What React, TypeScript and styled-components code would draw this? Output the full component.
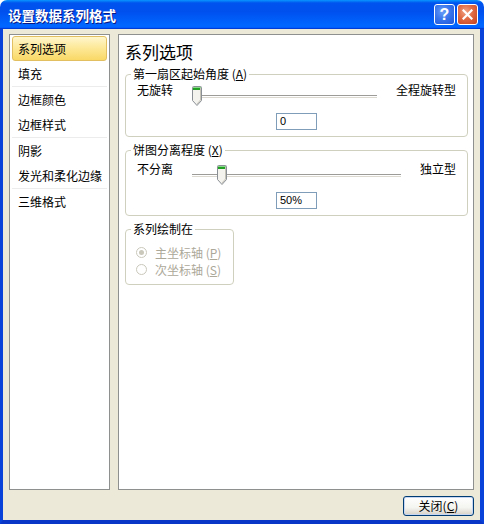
import React from 'react';
import styled, { createGlobalStyle } from 'styled-components';

const GlobalStyle = createGlobalStyle`
  html, body {
    margin: 0;
    padding: 0;
    background: #ffffff;
  }
  body {
    font-family: "Noto Sans CJK SC", "Liberation Sans", sans-serif;
    font-size: 12px;
    color: #000;
  }
`;

const Window = styled.div`
  width: 484px;
  height: 524px;
  display: flex;
  flex-direction: column;
  box-sizing: border-box;
`;

const TitleBar = styled.div`
  height: 29px;
  flex: none;
  display: flex;
  align-items: center;
  padding: 0 6px 0 8px;
  border-radius: 7px 7px 0 0;
  background: linear-gradient(
    #0997ff 0%,
    #0053ee 10%,
    #0050ee 40%,
    #0066ff 86%,
    #0066ff 92%,
    #005bff 95%,
    #003dd7 97%,
    #003dd7 100%
  );
`;

const Title = styled.div`
  flex: 1;
  color: #fff;
  font-weight: bold;
  font-size: 13.5px;
  line-height: 16px;
  text-shadow: 1px 1px 0 #0a1883;
`;

const CaptionButtons = styled.div`
  display: flex;
  gap: 2px;
`;

const CaptionButton = styled.div<{ $kind: 'help' | 'close' }>`
  width: 21px;
  height: 21px;
  box-sizing: border-box;
  border: 1px solid #fff;
  border-radius: 3px;
  display: flex;
  align-items: center;
  justify-content: center;
  color: #fff;
  font-family: "Liberation Sans", sans-serif;
  font-weight: bold;
  font-size: 16px;
  background: ${p =>
    p.$kind === 'help'
      ? 'radial-gradient(circle at 40% 35%, #6a9ef8 0%, #3a76ec 45%, #1f55d8 100%)'
      : 'radial-gradient(circle at 40% 35%, #f0a486 0%, #e06a43 45%, #c4401d 100%)'};
`;

const Body = styled.div`
  flex: 1;
  display: flex;
  flex-direction: column;
  background: #ece9d8;
  border-left: 3px solid #0842d8;
  border-right: 4px solid #0842d8;
  border-bottom: 4px solid #0a36c8;
  padding: 5px 6px 4px 6px;
  box-sizing: border-box;
  min-height: 0;
`;

const Main = styled.div`
  display: flex;
  gap: 8px;
  height: 456px;
`;

const NavList = styled.div`
  width: 101px;
  box-sizing: border-box;
  background: #fff;
  border: 1px solid #8e8f8f;
  padding-top: 1px;
  display: flex;
  flex-direction: column;
`;

const NavItem = styled.div<{ $active?: boolean }>`
  height: 25px;
  box-sizing: border-box;
  margin: 0 2px;
  padding-left: 5px;
  display: flex;
  align-items: center;
  line-height: 14px;
  white-space: nowrap;
  border: 1px solid ${p => (p.$active ? '#e2c062' : 'transparent')};
  border-radius: 3px;
  background: ${p =>
    p.$active ? 'linear-gradient(#fff6cc 0%, #fde99a 45%, #f9d866 100%)' : 'transparent'};
`;

const NavSeparator = styled.div`
  height: 1px;
  margin: 0 2px;
  background: #ececec;
`;

const Panel = styled.div`
  flex: 1;
  box-sizing: border-box;
  background: #fff;
  border: 1px solid #8e8f8f;
  padding: 8px 5px 0 6px;
  display: flex;
  flex-direction: column;
  align-items: flex-start;
`;

const Heading = styled.div`
  font-size: 17px;
  line-height: 18px;
`;

const Group = styled.fieldset<{ $width?: number; $gap?: number }>`
  margin: ${p => p.$gap ?? 6}px 0 0 0;
  padding: 0 11px 6px 11px;
  border: 1px solid #d0d0bf;
  border-radius: 4px;
  box-sizing: border-box;
  min-width: 0;
  width: ${p => (p.$width ? `${p.$width}px` : '100%')};
  display: flex;
  flex-direction: column;
  align-items: center;
`;

const Legend = styled.legend`
  padding: 0 2px;
  margin-left: -6px;
  font-size: 12px;
  line-height: 14px;
`;

const SliderRow = styled.div<{ $top: number }>`
  align-self: stretch;
  display: flex;
  margin-top: ${p => p.$top}px;
  height: 24px;
`;

const EndLabel = styled.span`
  line-height: 14px;
  white-space: nowrap;
`;

const Slider = styled.div`
  flex: 1;
  position: relative;
  margin: 0 19px;
`;

const Track = styled.div`
  position: absolute;
  left: 0;
  right: 0;
  top: 12px;
  height: 1px;
  background: #9d9c99;
  border-bottom: 1px solid #fff;
  box-shadow: 0 1px 0 #dcdad0;
`;

const Thumb = styled.svg`
  position: absolute;
  top: 3px;
`;

const ValueBox = styled.div`
  margin-top: 6px;
  width: 41px;
  height: 17px;
  box-sizing: border-box;
  border: 1px solid #7f9db9;
  padding-left: 3px;
  font-family: "Liberation Sans", sans-serif;
  font-size: 11px;
  line-height: 15px;
  align-self: center;
`;

const RadioList = styled.div`
  align-self: stretch;
  margin-top: 8px;
  margin-left: -1px;
  display: flex;
  flex-direction: column;
`;

const RadioRow = styled.div`
  display: flex;
  align-items: center;
  height: 17px;
  gap: 8px;
  color: #aca899;
  white-space: nowrap;
`;

const RadioCircle = styled.span<{ $checked?: boolean }>`
  width: 11px;
  height: 11px;
  box-sizing: border-box;
  border-radius: 50%;
  border: 1px solid #cac8bb;
  background: #fff;
  display: flex;
  align-items: center;
  justify-content: center;

  &::after {
    content: '';
    width: 5px;
    height: 5px;
    border-radius: 50%;
    background: ${p => (p.$checked ? '#cac8bb' : 'transparent')};
  }
`;

const Footer = styled.div`
  margin-top: 6px;
  display: flex;
  justify-content: flex-end;
`;

const CloseButton = styled.button`
  width: 71px;
  height: 20px;
  box-sizing: border-box;
  border: 1px solid #003c74;
  border-radius: 3px;
  background: linear-gradient(#ffffff 0%, #f4f4f0 60%, #d6d0c5 100%);
  box-shadow: inset 0 0 0 1px #c7d6f3;
  font-family: "Noto Sans CJK SC", sans-serif;
  font-size: 12px;
  line-height: 14px;
  padding: 0;
  color: #000;
`;

const navItems: (string | null)[] = [
  '系列选项',
  '填充',
  null,
  '边框颜色',
  '边框样式',
  null,
  '阴影',
  '发光和柔化边缘',
  null,
  '三维格式',
];

const SliderThumb = ({ ratio }: { ratio: number }) => (
  <Thumb width="10" height="20" viewBox="0 0 10 20" style={{ left: `calc((100% - 10px) * ${ratio})` }}>
    <path d="M0.5 1.5 Q0.5 0.5 1.5 0.5 H8.5 Q9.5 0.5 9.5 1.5 V14.5 L5 19.5 L0.5 14.5 Z" fill="#f4f3ee" stroke="#8a8f95" />
    <rect x="1" y="1" width="8" height="3" fill="#21a121" />
    <rect x="1" y="1" width="8" height="1" fill="#8ad68a" />
    <path d="M8.5 2 V14 L5 18" fill="none" stroke="#c5c3b8" />
  </Thumb>
);

const SliderField = ({
  left,
  right,
  ratio,
  top,
}: {
  left: string;
  right: string;
  ratio: number;
  top: number;
}) => (
  <SliderRow $top={top}>
    <EndLabel>{left}</EndLabel>
    <Slider>
      <Track />
      <SliderThumb ratio={ratio} />
    </Slider>
    <EndLabel>{right}</EndLabel>
  </SliderRow>
);

export default function App() {
  return (
    <Window>
      <GlobalStyle />
      <TitleBar>
        <Title>设置数据系列格式</Title>
        <CaptionButtons>
          <CaptionButton $kind="help">?</CaptionButton>
          <CaptionButton $kind="close">
            <svg width="11" height="11" viewBox="0 0 11 11">
              <path d="M1.5 1.5 L9.5 9.5 M9.5 1.5 L1.5 9.5" stroke="#fff" strokeWidth="2.2" strokeLinecap="square" />
            </svg>
          </CaptionButton>
        </CaptionButtons>
      </TitleBar>
      <Body>
        <Main>
          <NavList>
            {navItems.map((item, i) =>
              item === null ? (
                <NavSeparator key={i} />
              ) : (
                <NavItem key={i} $active={i === 0}>
                  {item}
                </NavItem>
              )
            )}
          </NavList>
          <Panel>
            <Heading>系列选项</Heading>
            <Group>
              <Legend>
                第一扇区起始角度 (<u>A</u>)
              </Legend>
              <SliderField left="无旋转" right="全程旋转型" ratio={0} top={2} />
              <ValueBox>0</ValueBox>
            </Group>
            <Group>
              <Legend>
                饼图分离程度 (<u>X</u>)
              </Legend>
              <SliderField left="不分离" right="独立型" ratio={50 / 400} top={5} />
              <ValueBox>50%</ValueBox>
            </Group>
            <Group $width={109}>
              <Legend>系列绘制在</Legend>
              <RadioList>
                <RadioRow>
                  <RadioCircle $checked />
                  <span>
                    主坐标轴 (<u>P</u>)
                  </span>
                </RadioRow>
                <RadioRow>
                  <RadioCircle />
                  <span>
                    次坐标轴 (<u>S</u>)
                  </span>
                </RadioRow>
              </RadioList>
            </Group>
          </Panel>
        </Main>
        <Footer>
          <CloseButton>
            关闭(<u>C</u>)
          </CloseButton>
        </Footer>
      </Body>
    </Window>
  );
}
